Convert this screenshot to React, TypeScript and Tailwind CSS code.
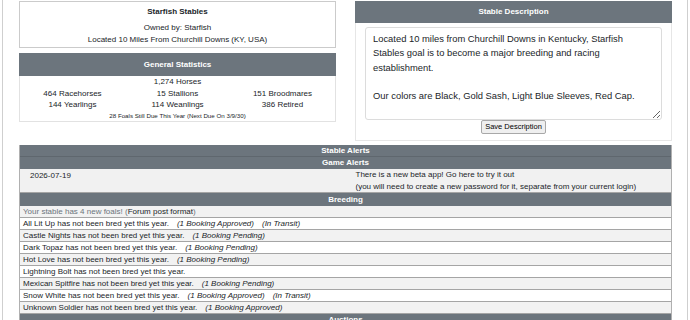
import React from 'react'

const breeding = [
  { name: 'All Lit Up', notes: ['(1 Booking Approved)', '(In Transit)'] },
  { name: 'Castle Nights', notes: ['(1 Booking Pending)'] },
  { name: 'Dark Topaz', notes: ['(1 Booking Pending)'] },
  { name: 'Hot Love', notes: ['(1 Booking Pending)'] },
  { name: 'Lightning Bolt', notes: [] },
  { name: 'Mexican Spitfire', notes: ['(1 Booking Pending)'] },
  { name: 'Snow White', notes: ['(1 Booking Approved)', '(In Transit)'] },
  { name: 'Unknown Soldier', notes: ['(1 Booking Approved)'] },
]

const description =
  'Located 10 miles from Churchill Downs in Kentucky, Starfish Stables goal is to become a major breeding and racing establishment.\n\nOur colors are Black, Gold Sash, Light Blue Sleeves, Red Cap.'

function Bar({ children, className = '' }: { children: React.ReactNode; className?: string }) {
  return (
    <div className={`bg-[#6c757d] text-white font-bold text-center text-[8px] ${className}`}>
      {children}
    </div>
  )
}

export default function App() {
  return (
    <div
      className="ml-[2px] w-[686px] min-h-[320px] border-x border-[#cfcfcf] bg-white pl-4 pr-[15px] pt-px text-[#212529]"
      style={{ fontFamily: '"Liberation Sans", Arial, sans-serif' }}
    >
      {/* Top: stable info + description */}
      <div className="grid grid-cols-2 gap-x-[19px] items-start">
        <div>
          <div className="h-[47px] border border-[#cbcbcb] pt-[4px] text-center text-[8px] leading-[12px]">
            <div className="font-bold mb-[4px]">Starfish Stables</div>
            <div>Owned by: Starfish</div>
            <div>Located 10 Miles From Churchill Downs (KY, USA)</div>
          </div>

          <Bar className="mt-[5px] h-[23px] leading-[23px]">General Statistics</Bar>
          <div className="border-x border-b border-[#e2e2e2] text-center text-[8px] leading-[11.7px]">
            <div>1,274 Horses</div>
            <div className="grid grid-cols-3">
              <div>464 Racehorses</div>
              <div>15 Stallions</div>
              <div>151 Broodmares</div>
            </div>
            <div className="grid grid-cols-3">
              <div>144 Yearlings</div>
              <div>114 Weanlings</div>
              <div>386 Retired</div>
            </div>
            <div className="text-[6.2px] leading-[10px]">28 Foals Still Due This Year (Next Due On 3/9/30)</div>
          </div>
        </div>

        <div>
          <Bar className="h-[22px] leading-[22px]">Stable Description</Bar>
          <div className="border-x border-b border-[#e6e6e6] px-[9px] pt-[4px] pb-[6px] flex flex-col items-center">
            <textarea
              className="block w-full h-[93px] rounded-[3px] border border-[#dcdcdc] px-[7px] py-[4px] text-[9.4px] leading-[14.3px] text-[#212529] outline-none"
              style={{ fontFamily: '"Liberation Sans", Arial, sans-serif' }}
              defaultValue={description}
            />
            <button className="h-[14px] px-[3px] rounded-[2px] border border-[#a8a8a8] bg-[#efefef] text-[7.5px] leading-[12px] text-black">
              Save Description
            </button>
          </div>
        </div>
      </div>

      {/* Alerts table */}
      <div className="mt-[4px] border-x border-[#b0b0b0] text-[8px]">
        <Bar className="h-[12px] leading-[12px] border-b border-[#5f676e]">Stable Alerts</Bar>
        <Bar className="h-[12px] leading-[12px]">Game Alerts</Bar>
        <div className="grid grid-cols-2 bg-[#f1f1f1] border-b border-[#a5a5a5] leading-[11.5px]">
          <div className="pl-[10px] pt-px">2026-07-19</div>
          <div className="pl-[10px]">
            <div>There is a new beta app! Go here to try it out</div>
            <div>(you will need to create a new password for it, separate from your current login)</div>
          </div>
        </div>
        <Bar className="h-[13px] leading-[13px]">Breeding</Bar>
        <div className="h-[12px] leading-[11px] pl-[3px] bg-[#f2f2f2] border-b border-[#a5a5a5] text-[#6c757d]">
          Your stable has 4 new foals! (<span className="text-[#212529]">Forum post format</span>)
        </div>
        {breeding.map((h, i) => (
          <div
            key={h.name}
            className={`h-[12px] leading-[11px] pl-[3px] border-b border-[#a5a5a5] whitespace-nowrap ${
              i % 2 === 0 ? 'bg-white' : 'bg-[#f2f2f2]'
            }`}
          >
            {h.name} has not been bred yet this year.
            {h.notes.map((n) => (
              <span key={n} className="italic ml-[8px]">
                {n}
              </span>
            ))}
          </div>
        ))}
        <Bar className="h-[12px] leading-[12px]">Auctions</Bar>
      </div>
    </div>
  )
}
